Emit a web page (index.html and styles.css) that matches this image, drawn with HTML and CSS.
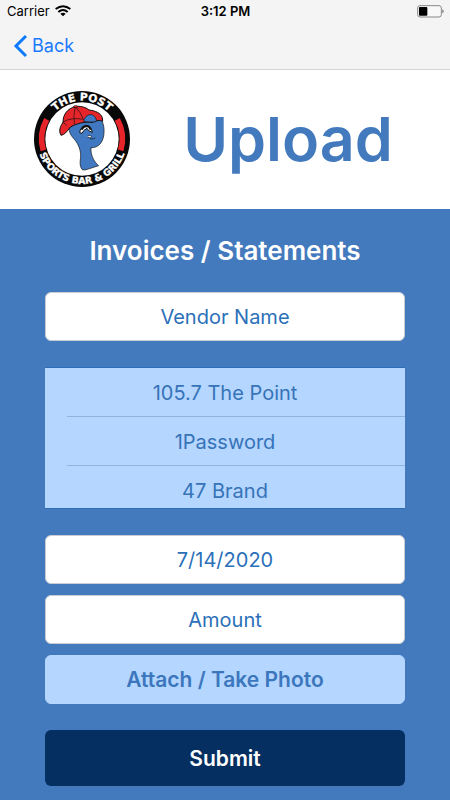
FILE: index.html
```html
<!DOCTYPE html>
<html lang="en">
<head>
<meta charset="utf-8">
<meta name="viewport" content="width=device-width, initial-scale=1">
<title>Upload</title>
<link rel="stylesheet" href="styles.css">
</head>
<body>
<header class="topbar">
  <div class="status">
    <div class="carrier">
      <span>Carrier</span>
      <svg class="wifi" viewBox="0 0 48 36" aria-hidden="true">
        <g fill="none" stroke="#000" stroke-width="6">
          <path d="M2 12Q24 -5 46 12"/>
          <path d="M10 21Q24 9 38 21"/>
        </g>
        <path d="M16 26Q24 20 32 26L24 34Z"/>
      </svg>
    </div>
    <time class="clock">3:12 PM</time>
    <svg class="battery" viewBox="0 0 81 39" aria-hidden="true">
      <rect x="2" y="2" width="71" height="34" rx="7" fill="#f8f8f8" stroke="#888" stroke-width="3"/>
      <rect x="6" y="6" width="25" height="26" rx="3"/>
      <path d="M76 13q4 2 4 6t-4 6z" fill="#777"/>
    </svg>
  </div>
  <nav class="nav">
    <a class="back" href="#">
      <svg class="chevron" viewBox="0 0 14 24" aria-hidden="true"><path d="M13 2L3 12L13 22" fill="none" stroke="#0b7aff" stroke-width="3"/></svg>
      <span>Back</span>
    </a>
  </nav>
</header>
<main>
  <section class="banner">
    <svg class="logo" viewBox="25 18 288 288" role="img" aria-label="The Post Sports Bar and Grill">
      <defs>
        <path id="arc-top" d="M54 162A115 115 0 0 1 284 162"/>
        <path id="arc-bottom" d="M34 162A135 135 0 0 0 304 162"/>
      </defs>
      <circle cx="169" cy="162" r="144" fill="#080808"/>
      <circle cx="169" cy="162" r="110" fill="#fff"/>
      <g fill="none" stroke="#e5252a" stroke-width="17">
        <path d="M63 103A121 121 0 0 0 53 196"/>
        <path d="M275 103A121 121 0 0 1 285 196"/>
      </g>
      <text class="logo-text logo-top"><textPath href="#arc-top" startOffset="50%">THE POST</textPath></text>
      <text class="logo-text logo-bottom"><textPath href="#arc-bottom" startOffset="50%">SPORTS BAR &amp; GRILL</textPath></text>
      <path d="M130 124C129 143 137 153 147 164C158 177 165 194 165 213C164 228 160 242 170 254Q176 257 188 252L219 242C207 232 197 215 196 197L196 188C217 189 230 174 234 153C238 129 233 106 218 96L150 112Z" fill="#4079c1" stroke="#111" stroke-width="2"/>
      <path d="M191 157Q195 166 209 159" fill="none" stroke="#111" stroke-width="2"/>
      <path d="M106 151C96 133 109 118 112 111C112 88 126 70 149 65C162 62 180 66 190 75C209 77 225 84 230 98L231 109C223 104 211 107 201 112C177 109 149 116 132 128C124 140 117 149 106 151Z" fill="#e5252a" stroke="#111" stroke-width="3" stroke-linejoin="round"/>
      <path d="M174 109C176 94 192 83 204 92C212 97 213 107 211 110C197 112 184 111 174 109Z" fill="#4079c1" stroke="#111" stroke-width="2"/>
      <path d="M149 66Q142 89 146 118M112 111Q137 96 174 103M172 101Q165 82 151 67M112 112Q119 115 123 122" fill="none" stroke="#111" stroke-width="2"/>
      <ellipse cx="150" cy="65" rx="7" ry="3" fill="#e5252a" stroke="#111" stroke-width="2"/>
      <path d="M162 143Q164 126 180 121Q196 120 200 142L189 137L184 130L175 136L169 145Z" fill="#fff" stroke="#111" stroke-width="3"/>
      <path d="M168 134Q171 124 183 123Q192 124 195 134" fill="none" stroke="#111" stroke-width="6"/>
      <path d="M186 153Q193 149 198 154L194 159L185 156" fill="#fff" stroke="#111" stroke-width="2"/>
    </svg>
    <h1 class="title">Upload</h1>
  </section>
  <form class="form">
    <h2 class="heading">Invoices / Statements</h2>
    <input class="field" type="text" aria-label="Vendor Name" placeholder="Vendor Name">
    <ul class="vendors">
      <li><button class="vendor" type="button">105.7 The Point</button></li>
      <li><button class="vendor" type="button">1Password</button></li>
      <li><button class="vendor" type="button">47 Brand</button></li>
    </ul>
    <div class="details">
      <input class="field" type="text" aria-label="Date" value="7/14/2020">
      <input class="field" type="text" aria-label="Amount" placeholder="Amount">
      <button class="attach" type="button">Attach / Take Photo</button>
    </div>
    <button class="submit" type="submit">Submit</button>
  </form>
</main>
</body>
</html>
```
FILE: styles.css
```css
* { box-sizing: border-box; }

body {
  margin: 0;
  min-height: 100vh;
  background: #437abd;
  font-family: Inter, "Liberation Sans", sans-serif;
}

button, input { font: inherit; }

.topbar {
  background: #f4f4f4;
  border-bottom: 1px solid #d5d5d5;
}

.status {
  display: grid;
  grid-template-columns: 1fr auto 1fr;
  align-items: center;
  height: 22px;
  padding: 0 6px 0 7px;
  font-size: 13px;
}

.carrier { display: flex; align-items: center; gap: 5px; }
.wifi { width: 16px; height: 12px; }
.clock { font-weight: 600; }
.battery { width: 27px; height: 13px; justify-self: end; }

.nav { display: flex; height: 47px; padding: 0 13px; }

.back {
  display: flex;
  align-items: center;
  gap: 5px;
  color: #1a7aff;
  font-size: 18px;
  text-decoration: none;
}

.chevron { width: 14px; height: 24px; }

.banner {
  display: flex;
  align-items: center;
  height: 139px;
  padding: 0 34px 1px;
  background: #fff;
}

.logo { flex: none; width: 96px; height: 96px; }

.logo-text {
  fill: #fff;
  stroke: #fff;
  stroke-width: 1px;
  font-family: "DejaVu Sans", sans-serif;
  font-weight: 700;
  text-anchor: middle;
}

.logo-top { font-size: 32px; }
.logo-bottom { font-size: 28px; }

.title {
  flex: 1;
  margin: 0;
  padding-left: 30px;
  color: #437abd;
  font-size: 61px;
  font-weight: 600;
  line-height: 80px;
  text-align: center;
}

.form {
  display: flex;
  flex-direction: column;
  padding: 24px 45px 14px;
}

.heading {
  margin: 0 0 23px;
  color: #fff;
  font-size: 26px;
  font-weight: 600;
  line-height: 36px;
  text-align: center;
}

.field, .attach {
  width: 100%;
  height: 49px;
  padding: 0 12px;
  border: 1px solid #c8cdd3;
  border-radius: 6px;
  background: #fff;
  color: #2b70b9;
  font-size: 20px;
  text-align: center;
}

.field::placeholder { color: #2b70b9; opacity: 1; }

.vendors {
  height: 142px;
  margin: 26px 0;
  padding: 0;
  overflow: hidden;
  border: 1px solid #2c6fb6;
  border-width: 1px 0;
  background: #b4d6ff;
  list-style: none;
}

.vendor {
  display: block;
  width: 100%;
  height: 49px;
  padding: 0;
  border: 0;
  background: linear-gradient(#91b4df, #91b4df) 22px 100% / 100% 1px no-repeat;
  color: #3673b8;
  font-size: 20px;
}

.details { display: flex; flex-direction: column; gap: 11px; }

.attach {
  border-color: #b4d6ff;
  background: #b4d6ff;
  color: #3c77bd;
  font-size: 21px;
  font-weight: 600;
}

.submit {
  height: 56px;
  margin-top: 26px;
  border: 0;
  border-radius: 6px;
  background: #052f60;
  color: #fff;
  font-size: 21px;
  font-weight: 600;
}
```
